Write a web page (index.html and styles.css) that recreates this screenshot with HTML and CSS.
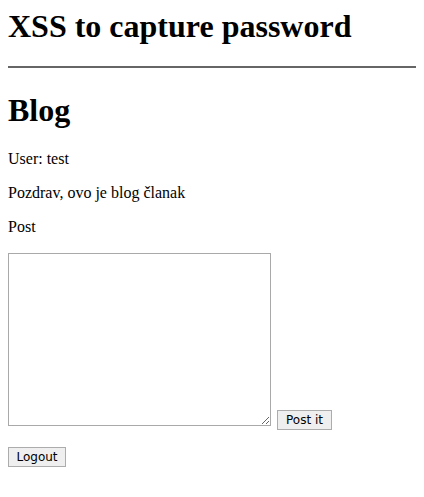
FILE: index.html
```html
<!DOCTYPE html>
<html lang="hr">
<head>
<meta charset="UTF-8">
<title>XSS to capture password</title>
<link rel="stylesheet" href="styles.css">
</head>
<body>

<h1 class="title">XSS to capture password</h1>
<div class="divider"></div>

<h1 class="blog-title">Blog</h1>
<p>User: test</p>
<p>Pozdrav, ovo je blog članak</p>
<p>Post</p>

<form class="post-form" action="#" method="post">
    <textarea class="post-text" name="post"></textarea>
    <button type="submit" class="btn btn-post">Post it</button>
</form>

<form class="logout-form" action="#" method="post">
    <button type="submit" class="btn">Logout</button>
</form>

</body>
</html>
```

FILE: styles.css
```css
html {
    overflow: hidden;
}
body {
    font-family: "Liberation Serif", "Times New Roman", serif;
    font-size: 16px;
    color: #000;
    background-color: #fff;
    margin: 8px;
}
h1 {
    font-size: 32px;
    font-weight: bold;
    margin: 21px 0;
}
.title {
    margin-top: 0;
}
.divider {
    height: 2px;
    background-color: #666;
    width: calc(100vw - 8px);
}
.blog-title {
    margin-top: 24px;
}
p {
    margin: 16px 0;
}
.post-form {
    display: flex;
    align-items: flex-end;
    margin-top: 17px;
}
.post-text {
    width: 263px;
    height: 173px;
    box-sizing: border-box;
    border: 1px solid #a9a9a9;
    margin: 0;
    padding: 2px;
    resize: both;
}
.btn {
    font-family: "DejaVu Sans", Verdana, sans-serif;
    font-size: 12px;
    color: #000;
    background-color: #efefef;
    border: 1px solid #acacac;
    border-radius: 0;
    height: 20px;
    padding: 0;
    margin: 0;
}
.btn-post {
    margin-left: 6px;
    margin-bottom: -4px;
    width: 55px;
}
.logout-form {
    margin-top: 21px;
}
.logout-form .btn {
    width: 58px;
}
```
